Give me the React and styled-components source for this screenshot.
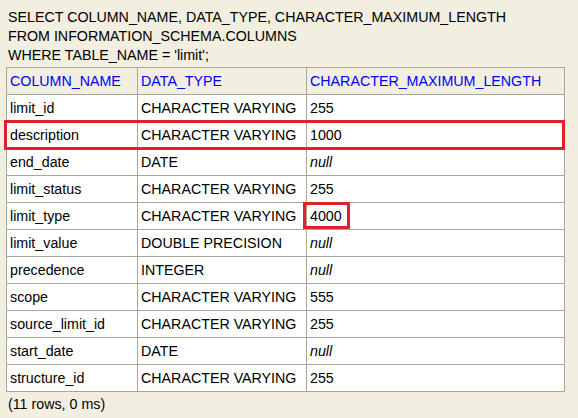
import React from 'react';
import styled, { createGlobalStyle } from 'styled-components';

const Global = createGlobalStyle`
  body {
    margin: 0;
    background: #f2efe0;
    font-family: Arial, "Liberation Sans", sans-serif;
    font-size: 14.25px;
    color: #000;
  }
`;

const Page = styled.div`
  padding: 8px 6px;
`;

const Query = styled.div`
  padding-left: 2px;
  line-height: 19px;
`;

const Table = styled.table`
  border-collapse: collapse;
  width: 559px;
  margin-top: 2px;
  border: 1px solid #aaa69a;
`;

const Th = styled.th`
  text-align: left;
  font-weight: normal;
  color: #0000ff;
  background: #f2efe0;
  height: 26px;
  padding: 0 3px;
  border: 1px solid #aaa69a;
  white-space: nowrap;
`;

const Td = styled.td`
  background: #fff;
  height: 26px;
  padding: 0 3px;
  border: 1px solid #aaa69a;
  white-space: nowrap;
  font-style: ${p => (p.$null ? 'italic' : 'normal')};
  position: relative;
`;

const Mark = styled.span`
  position: absolute;
  left: ${p => (p.$row ? '-3px' : '-4px')};
  top: ${p => (p.$row ? '-2px' : '-1px')};
  width: ${p => (p.$row ? '561px' : '47px')};
  height: ${p => (p.$row ? '30px' : '27px')};
  border: 3px solid #e0202a;
  box-sizing: border-box;
  pointer-events: none;
  z-index: 1;
`;

const Footer = styled.div`
  padding-left: 2px;
  margin-top: 4px;
`;

const rows = [
  ['limit_id', 'CHARACTER VARYING', '255'],
  ['description', 'CHARACTER VARYING', '1000', 'row'],
  ['end_date', 'DATE', null],
  ['limit_status', 'CHARACTER VARYING', '255'],
  ['limit_type', 'CHARACTER VARYING', '4000', 'cell'],
  ['limit_value', 'DOUBLE PRECISION', null],
  ['precedence', 'INTEGER', null],
  ['scope', 'CHARACTER VARYING', '555'],
  ['source_limit_id', 'CHARACTER VARYING', '255'],
  ['start_date', 'DATE', null],
  ['structure_id', 'CHARACTER VARYING', '255'],
];

export default function App() {
  return (
    <Page>
      <Global />
      <Query>SELECT COLUMN_NAME, DATA_TYPE, CHARACTER_MAXIMUM_LENGTH</Query>
      <Query>FROM INFORMATION_SCHEMA.COLUMNS</Query>
      <Query>WHERE TABLE_NAME = 'limit';</Query>
      <Table>
        <thead>
          <tr>
            <Th style={{ width: 124 }}>COLUMN_NAME</Th>
            <Th style={{ width: 162 }}>DATA_TYPE</Th>
            <Th>CHARACTER_MAXIMUM_LENGTH</Th>
          </tr>
        </thead>
        <tbody>
          {rows.map(([name, type, len, mark]) => (
            <tr key={name}>
              <Td>
                {name}
                {mark === 'row' && <Mark $row />}
              </Td>
              <Td>{type}</Td>
              <Td $null={len === null}>
                {len === null ? 'null' : len}
                {mark === 'cell' && <Mark />}
              </Td>
            </tr>
          ))}
        </tbody>
      </Table>
      <Footer>(11 rows, 0 ms)</Footer>
    </Page>
  );
}
